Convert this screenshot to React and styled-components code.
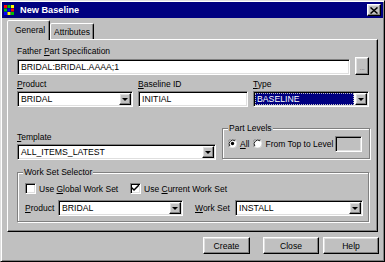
import React from 'react'
import styled, { createGlobalStyle } from 'styled-components'

const GlobalStyle = createGlobalStyle`
  html, body {
    margin: 0;
    padding: 0;
    background: #c0c0c0;
  }
  body {
    font-family: "Liberation Sans", Arial, sans-serif;
    font-size: 8.5px;
    color: #000;
  }
  * { box-sizing: border-box; }
`

const Window = styled.div`
  width: 385px;
  height: 262px;
  background: #c0c0c0;
  border: 1px solid;
  border-color: #dfdfdf #000 #000 #dfdfdf;
  box-shadow: inset 1px 1px #fff, inset -1px -1px #808080;
  padding: 1px;
  display: flex;
  flex-direction: column;
`

const TitleBar = styled.div`
  height: 16px;
  background: #000080;
  display: flex;
  align-items: center;
  padding: 0 2px 0 2px;
`

const TitleText = styled.div`
  color: #fff;
  font-weight: bold;
  font-size: 9.2px;
  margin-left: 6px;
  flex: 1;
`

const CloseBtn = styled.div`
  width: 14px;
  height: 12px;
  background: #c0c0c0;
  border: 1px solid;
  border-color: #fff #000 #000 #fff;
  box-shadow: inset -1px -1px #808080, inset 1px 1px #dfdfdf;
  display: flex;
  align-items: center;
  justify-content: center;
`

const Body = styled.div`
  padding: 3px 4px 0 5px;
  display: flex;
  flex-direction: column;
`

const TabStrip = styled.div`
  display: flex;
  align-items: flex-end;
  height: 19px;
  position: relative;
  z-index: 1;
  margin-bottom: -1px;
`

const Tab = styled.div`
  width: ${p => p.$w}px;
  height: ${p => (p.$active ? 20 : 16)}px;
  margin-bottom: ${p => (p.$active ? 0 : 1)}px;
  background: #c0c0c0;
  border: 1px solid;
  border-bottom: none;
  border-color: #fff #000 transparent #fff;
  border-radius: 2px 2px 0 0;
  box-shadow: inset -1px 0 #808080;
  padding: ${p => (p.$active ? '4px 0 0 7px' : '3px 0 0 3px')};
  line-height: 10px;
`

const Panel = styled.div`
  width: 371px;
  height: 193px;
  border: 1px solid;
  border-color: #fff #000 #000 #fff;
  box-shadow: inset -1px -1px #808080;
  padding: 6px 0 0 9px;
  display: flex;
  flex-direction: column;
`

const Label = styled.div`
  height: ${p => p.$h || 12}px;
  line-height: ${p => p.$h || 12}px;
  white-space: nowrap;
  width: ${p => (p.$w ? `${p.$w}px` : 'auto')};
  margin-left: ${p => p.$ml || 0}px;
  flex-shrink: 0;
`

const U = styled.span`
  text-decoration: underline;
  text-underline-offset: 1px;
`

const SpecRow = styled.div`
  display: flex;
  align-items: flex-end;
  height: 18px;
`

const Field = styled.div`
  width: ${p => (p.$w ? `${p.$w}px` : '100%')};
  height: 16px;
  flex-shrink: 0;
  background: ${p => p.$bg || '#fff'};
  border: 1px solid;
  border-color: #808080 #fff #fff #808080;
  box-shadow: inset 1px 1px #000, inset -1px -1px #dfdfdf;
  padding: 0 2px 0 3px;
  display: flex;
  align-items: center;
  font-size: 8.7px;
  white-space: nowrap;
  overflow: hidden;
`

const Raised = styled.div`
  background: #c0c0c0;
  border: 1px solid;
  border-color: #fff #000 #000 #fff;
  box-shadow: inset -1px -1px #808080, inset 1px 1px #dfdfdf;
  display: flex;
  align-items: center;
  justify-content: center;
  flex-shrink: 0;
`

const EllipsisBtn = styled(Raised)`
  width: 14px;
  height: 18px;
  margin-left: 5px;
  color: #808080;
  font-size: 8px;
  letter-spacing: -0.5px;
  padding-top: 2px;
`

const DropBtn = styled(Raised)`
  width: 12px;
  height: 12px;
  margin-left: auto;
  margin-right: -1px;
  &::after {
    content: "";
    border-left: 3px solid transparent;
    border-right: 3px solid transparent;
    border-top: 3px solid #000;
  }
`

const Selected = styled.div`
  flex: 1;
  align-self: stretch;
  margin: 1px 1px 1px -2px;
  padding-left: 2px;
  background: #000080;
  color: #fff;
  display: flex;
  align-items: center;
  outline: 1px dotted #c0c0c0;
  outline-offset: -1px;
`

const FieldsGrid = styled.div`
  display: grid;
  grid-template-columns: 116px 110px 116px;
  column-gap: 5px;
  margin-top: 3px;
`

const Cell = styled.div`
  display: flex;
  flex-direction: column;
  & > ${Field} { margin-top: 1px; }
`

const MidRow = styled.div`
  display: flex;
  align-items: flex-end;
  margin-top: 21px;
`

const Group = styled.div`
  position: relative;
  width: ${p => p.$w}px;
  height: ${p => p.$h}px;
  flex-shrink: 0;
  border: 1px solid #808080;
  box-shadow: 1px 1px 0 #fff, inset 1px 1px 0 #fff;
`

const Legend = styled.span`
  position: absolute;
  top: -6px;
  left: 5px;
  padding: 0 1px;
  background: #c0c0c0;
  line-height: 10px;
`

const LevelsGroup = styled(Group)`
  margin-left: 6px;
  margin-bottom: 1px;
  display: flex;
  align-items: center;
  padding: 0 0 0 5px;
`

const RadioItem = styled.div`
  display: flex;
  align-items: center;
  gap: 3px;
  margin-right: ${p => p.$mr}px;
  white-space: nowrap;
  flex-shrink: 0;
`

const WorkGroup = styled(Group)`
  margin-top: 12px;
  padding: 10px 0 0 7px;
  display: flex;
  flex-direction: column;
`

const CheckRow = styled.div`
  display: flex;
  align-items: center;
  height: 11px;
`

const CheckItem = styled.div`
  width: ${p => p.$w}px;
  display: flex;
  align-items: center;
  gap: 3px;
  white-space: nowrap;
`

const CheckBox = styled.div`
  width: 11px;
  height: 11px;
  background: #fff;
  border: 1px solid;
  border-color: #808080 #fff #fff #808080;
  box-shadow: inset 1px 1px #000, inset -1px -1px #dfdfdf;
  display: flex;
  align-items: center;
  justify-content: center;
`

const SetRow = styled.div`
  display: flex;
  align-items: center;
  margin-top: 6px;
`

const ButtonRow = styled.div`
  display: flex;
  justify-content: flex-end;
  margin-top: 5px;
`

const Button = styled(Raised)`
  width: ${p => p.$w}px;
  height: 17px;
  margin-left: ${p => p.$ml || 0}px;
  font-size: 8.6px;
`

const Combo = ({ w, children, selected }) => (
  <Field $w={w}>
    {selected ? <Selected>{children}</Selected> : children}
    <DropBtn />
  </Field>
)

const Radio = ({ checked }) => (
  <svg width="9" height="9" viewBox="0 0 12 12">
    <circle cx="6" cy="6" r="5.5" fill="#fff" />
    <path d="M1.5 10.5 A6 6 0 0 1 10.5 1.5" stroke="#808080" fill="none" strokeWidth="1.2" />
    <path d="M2.5 9.5 A5 5 0 0 1 9.5 2.5" stroke="#000" fill="none" strokeWidth="1.2" />
    <path d="M10.5 1.5 A6 6 0 0 1 1.5 10.5" stroke="#dfdfdf" fill="none" strokeWidth="1.2" />
    {checked && <circle cx="6" cy="6" r="2.2" fill="#000" />}
  </svg>
)

const Check = () => (
  <svg width="7" height="7" viewBox="0 0 7 7">
    <path d="M0 2 L0 4 L2 6 L7 1 L7 -1 L2 4 Z" fill="#000" />
  </svg>
)

const AppIcon = () => (
  <svg width="10" height="10" viewBox="0 0 10 10">
    <rect x="0" y="0" width="3" height="3" fill="#ff0000" />
    <rect x="3.5" y="0" width="3" height="3" fill="#00c000" />
    <rect x="7" y="0" width="3" height="3" fill="#ffff00" />
    <rect x="0" y="3.5" width="3" height="3" fill="#00c000" />
    <rect x="3.5" y="3.5" width="3" height="3" fill="#0000ff" />
    <rect x="7" y="3.5" width="3" height="3" fill="#ff0000" />
    <rect x="0" y="7" width="3" height="3" fill="#0000ff" />
    <rect x="3.5" y="7" width="3" height="3" fill="#ffff00" />
    <rect x="7" y="7" width="3" height="3" fill="#00c000" />
  </svg>
)

export default function App() {
  return (
    <>
      <GlobalStyle />
      <Window>
        <TitleBar>
          <AppIcon />
          <TitleText>New Baseline</TitleText>
          <CloseBtn>
            <svg width="8" height="7" viewBox="0 0 8 7">
              <path d="M0.5 0.5 L7.5 6.5 M7.5 0.5 L0.5 6.5" stroke="#000" strokeWidth="1.5" />
            </svg>
          </CloseBtn>
        </TitleBar>
        <Body>
          <TabStrip>
            <Tab $active $w={43}>General</Tab>
            <Tab $w={44}>Attributes</Tab>
          </TabStrip>
          <Panel>
            <Label $h={11}>Father <U>P</U>art Specification</Label>
            <SpecRow>
              <Field $w={333}>BRIDAL:BRIDAL.AAAA;1</Field>
              <EllipsisBtn>...</EllipsisBtn>
            </SpecRow>
            <FieldsGrid>
              <Cell>
                <Label><U>P</U>roduct</Label>
                <Combo>BRIDAL</Combo>
              </Cell>
              <Cell>
                <Label><U>B</U>aseline ID</Label>
                <Field>INITIAL</Field>
              </Cell>
              <Cell>
                <Label><U>T</U>ype</Label>
                <Combo selected>BASELINE</Combo>
              </Cell>
            </FieldsGrid>
            <MidRow>
              <Cell>
                <Label><U>T</U>emplate</Label>
                <Combo w={199}>ALL_ITEMS_LATEST</Combo>
              </Cell>
              <LevelsGroup $w={148} $h={31}>
                <Legend>Part Levels</Legend>
                <RadioItem $mr={4}><Radio checked /><span><U>A</U>ll</span></RadioItem>
                <RadioItem $mr={2}><Radio /><span>From Top to Level</span></RadioItem>
                <Field $w={27} $bg="#c0c0c0" />
              </LevelsGroup>
            </MidRow>
            <WorkGroup $w={352} $h={50}>
              <Legend>Work Set Selector</Legend>
              <CheckRow>
                <CheckItem $w={105}><CheckBox /><span>Use <U>G</U>lobal Work Set</span></CheckItem>
                <CheckItem $w={150}><CheckBox><Check /></CheckBox><span>Use <U>C</U>urrent Work Set</span></CheckItem>
              </CheckRow>
              <SetRow>
                <Label $w={33}><U>P</U>roduct</Label>
                <Combo w={125}>BRIDAL</Combo>
                <Label $w={40} $ml={12}><U>W</U>ork Set</Label>
                <Combo w={128}>INSTALL</Combo>
              </SetRow>
            </WorkGroup>
          </Panel>
          <ButtonRow>
            <Button $w={47}>Create</Button>
            <Button $w={56} $ml={13}>Close</Button>
            <Button $w={56} $ml={4}>Help</Button>
          </ButtonRow>
        </Body>
      </Window>
    </>
  )
}
